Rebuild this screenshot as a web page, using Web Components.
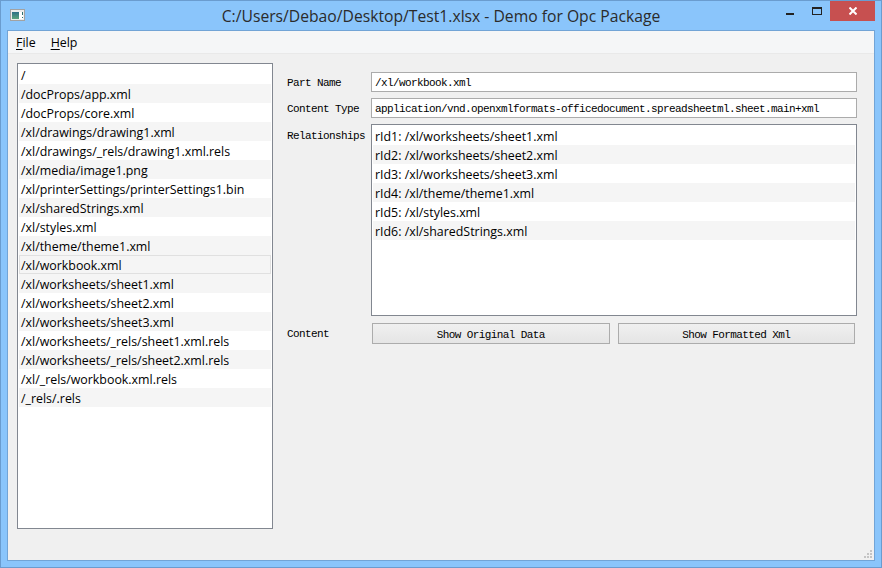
<!DOCTYPE html>
<html>
<head>
<meta charset="utf-8">
<title>Demo for Opc Package</title>
<style>
html, body { margin: 0; padding: 0; }
body { width: 882px; height: 568px; overflow: hidden; font-family: "Open Sans", sans-serif; }
</style>
</head>
<body>
<opc-window heading="C:/Users/Debao/Desktop/Test1.xlsx - Demo for Opc Package">
  <opc-menu></opc-menu>
  <opc-main>
    <opc-list id="parts" slot="left" class="parts"></opc-list>
    <opc-field slot="right" label="Part Name" value="/xl/workbook.xml"></opc-field>
    <opc-field slot="right" label="Content Type" value="application/vnd.openxmlformats-officedocument.spreadsheetml.sheet.main+xml"></opc-field>
    <opc-rels slot="right"></opc-rels>
    <opc-actions slot="right"></opc-actions>
  </opc-main>
</opc-window>

<script>
const MONO = '"Liberation Mono", monospace';
const UI = '"Open Sans", sans-serif';

class OpcWindow extends HTMLElement {
  constructor() {
    super();
    let root = this.attachShadow({ mode: 'open' });
    root.innerHTML = `
    <style>
      :host { display: flex; flex-direction: column; box-sizing: border-box; width: 882px; height: 568px;
        background: #8ac5fb; border: 1px solid #6a9ccf; }
      .bar { display: flex; align-items: flex-start; height: 29px; flex: none; }
      .icon { margin: 8px 0 0 9px; width: 15px; height: 12px; flex: none; margin-right: 1px; }
      .title { flex: 1; text-align: center; font: 15.7px/30px ${UI}; color: #2b2b2b; padding-left: 79px; white-space: nowrap; }
      .ctl { flex: none; display: flex; justify-content: center; align-items: center; height: 20px; }
      .min { width: 26px; padding-top: 5px; box-sizing: border-box; }
      .max { width: 27px; }
      .close { width: 45px; background: #c75050; margin-right: 6px; }
      svg { display: block; }
      .client { flex: 1; min-height: 0; display: flex; flex-direction: column; margin: 0 6px 6px 6px;
        border: 1px solid #72a4d6; background: #f0f0f0; position: relative; }
      .grip { position: absolute; right: 2px; bottom: 2px; }
    </style>
    <div class="bar">
      <svg class="icon" viewBox="0 0 15 12">
        <defs><linearGradient id="g" x1="0" y1="0" x2="0" y2="1"><stop offset="0" stop-color="#2d6f86"/><stop offset="1" stop-color="#5aa37c"/></linearGradient></defs>
        <rect x=".5" y=".5" width="14" height="11" fill="#ececec" stroke="#a2a2a2"/>
        <rect x="2" y="3" width="7" height="7" fill="url(#g)"/>
        <rect x="9" y="3" width="4" height="7" fill="#fff"/>
        <rect x="12" y="3" width="1" height="3" fill="#2d6f6f"/>
        <rect x="12" y="8" width="1" height="1" fill="#2d6f6f"/>
      </svg>
      <div class="title"></div>
      <div class="ctl min"><svg width="8" height="2"><rect width="8" height="2" fill="#222"/></svg></div>
      <div class="ctl max"><svg width="10" height="8"><rect x=".5" y=".5" width="9" height="7" fill="none" stroke="#222"/><rect width="10" height="2" fill="#222"/></svg></div>
      <div class="ctl close"><svg width="8" height="8" viewBox="0 0 8 8"><path d="M0.5 0.5L7.5 7.5M7.5 0.5L0.5 7.5" stroke="#fff" stroke-width="2"/></svg></div>
    </div>
    <div class="client">
      <slot></slot>
      <svg class="grip" width="8" height="8" fill="#c4c4c4">
        <rect x="6" y="0" width="2" height="2"/><rect x="3" y="3" width="2" height="2"/><rect x="6" y="3" width="2" height="2"/>
        <rect x="0" y="6" width="2" height="2"/><rect x="3" y="6" width="2" height="2"/><rect x="6" y="6" width="2" height="2"/>
      </svg>
    </div>`;
    root.querySelector('.title').textContent = this.getAttribute('heading');
  }
}
customElements.define('opc-window', OpcWindow);

class OpcMenu extends HTMLElement {
  constructor() {
    super();
    this.attachShadow({ mode: 'open' }).innerHTML = `
    <style>
      :host { display: flex; flex: none; height: 22px; background: #f5f6f7; border-bottom: 1px solid #e9e9e9;
        font: 12.4px/24px ${UI}; color: #000; padding-left: 8px; gap: 15px; }
      u { text-underline-offset: 2px; }
    </style>
    <span><u>F</u>ile</span><span><u>H</u>elp</span>`;
  }
}
customElements.define('opc-menu', OpcMenu);

class OpcMain extends HTMLElement {
  constructor() {
    super();
    this.attachShadow({ mode: 'open' }).innerHTML = `
    <style>
      :host { display: flex; flex: 1; min-height: 0; padding: 9px 17px 31px 9px; gap: 14px; }
      .l { width: 256px; flex: none; display: flex; }
      .r { flex: 1; min-width: 0; display: flex; flex-direction: column; padding-top: 9px; }
    </style>
    <div class="l"><slot name="left"></slot></div>
    <div class="r"><slot name="right"></slot></div>`;
  }
}
customElements.define('opc-main', OpcMain);

class OpcList extends HTMLElement {
  constructor() {
    super();
    this.attachShadow({ mode: 'open' }).innerHTML = `
    <style>
      :host { display: block; box-sizing: border-box; flex: 1; background: #fff; border: 1px solid #828790;
        padding: 1px; font: 12.4px/21px ${UI}; color: #000; overflow: hidden; }
      div { height: 19px; padding-left: 2px; white-space: nowrap; box-sizing: border-box; }
      div:nth-child(even) { background: #f5f5f5; }
      div.sel { background: #f5f5f5; outline: 1px solid #e0e0e0; outline-offset: -1px; }
    </style>
    <section></section>`;
  }
  set items(val) {
    let box = this.shadowRoot.querySelector('section');
    val.forEach(text => {
      let row = document.createElement('div');
      row.textContent = text;
      if (text == this.selected) row.className = 'sel';
      box.appendChild(row);
    });
  }
}
customElements.define('opc-list', OpcList);

class OpcField extends HTMLElement {
  constructor() {
    super();
    let root = this.attachShadow({ mode: 'open' });
    root.innerHTML = `
    <style>
      :host { display: flex; flex: none; height: 20px; margin-bottom: 6px; align-items: stretch;
        font: 11px/22px ${MONO}; letter-spacing: -.6px; color: #000; }
      .lab { width: 84px; flex: none; white-space: nowrap; }
      .val { flex: 1; box-sizing: border-box; background: #fff; border: 1px solid #ababab; padding-left: 3px;
        line-height: 20px; white-space: nowrap; overflow: hidden; }
    </style>
    <div class="lab"></div><div class="val"></div>`;
    root.querySelector('.lab').textContent = this.getAttribute('label');
    root.querySelector('.val').textContent = this.getAttribute('value');
  }
}
customElements.define('opc-field', OpcField);

class OpcRels extends HTMLElement {
  constructor() {
    super();
    this.attachShadow({ mode: 'open' }).innerHTML = `
    <style>
      :host { display: flex; flex: none; height: 192px; }
      .lab { width: 84px; flex: none; font: 11px/24px ${MONO}; letter-spacing: -.6px; color: #000; }
      opc-list { flex: 1; padding: 1px; }
    </style>
    <div class="lab">Relationships</div>
    <opc-list></opc-list>`;
    this.shadowRoot.querySelector('opc-list').items = [
      'rId1: /xl/worksheets/sheet1.xml',
      'rId2: /xl/worksheets/sheet2.xml',
      'rId3: /xl/worksheets/sheet3.xml',
      'rId4: /xl/theme/theme1.xml',
      'rId5: /xl/styles.xml',
      'rId6: /xl/sharedStrings.xml'
    ];
  }
}
customElements.define('opc-rels', OpcRels);

class OpcActions extends HTMLElement {
  constructor() {
    super();
    this.attachShadow({ mode: 'open' }).innerHTML = `
    <style>
      :host { display: flex; flex: none; height: 21px; margin-top: 7px; margin-right: 2px;
        font: 11px/22px ${MONO}; letter-spacing: -.6px; color: #000; }
      .lab { width: 85px; flex: none; }
      .btns { flex: 1; display: flex; gap: 8px; }
      .btn { flex: 1; box-sizing: border-box; text-align: center; border: 1px solid #acacac;
        background: linear-gradient(#f0f0f0, #e5e5e5); line-height: 22px; overflow: hidden; }
    </style>
    <div class="lab">Content</div>
    <div class="btns"><div class="btn">Show Original Data</div><div class="btn">Show Formatted Xml</div></div>`;
  }
}
customElements.define('opc-actions', OpcActions);

document.addEventListener('DOMContentLoaded', function() {
  let parts = document.getElementById('parts');
  parts.selected = '/xl/workbook.xml';
  parts.items = [
    '/',
    '/docProps/app.xml',
    '/docProps/core.xml',
    '/xl/drawings/drawing1.xml',
    '/xl/drawings/_rels/drawing1.xml.rels',
    '/xl/media/image1.png',
    '/xl/printerSettings/printerSettings1.bin',
    '/xl/sharedStrings.xml',
    '/xl/styles.xml',
    '/xl/theme/theme1.xml',
    '/xl/workbook.xml',
    '/xl/worksheets/sheet1.xml',
    '/xl/worksheets/sheet2.xml',
    '/xl/worksheets/sheet3.xml',
    '/xl/worksheets/_rels/sheet1.xml.rels',
    '/xl/worksheets/_rels/sheet2.xml.rels',
    '/xl/_rels/workbook.xml.rels',
    '/_rels/.rels'
  ];
});
</script>
</body>
</html>
